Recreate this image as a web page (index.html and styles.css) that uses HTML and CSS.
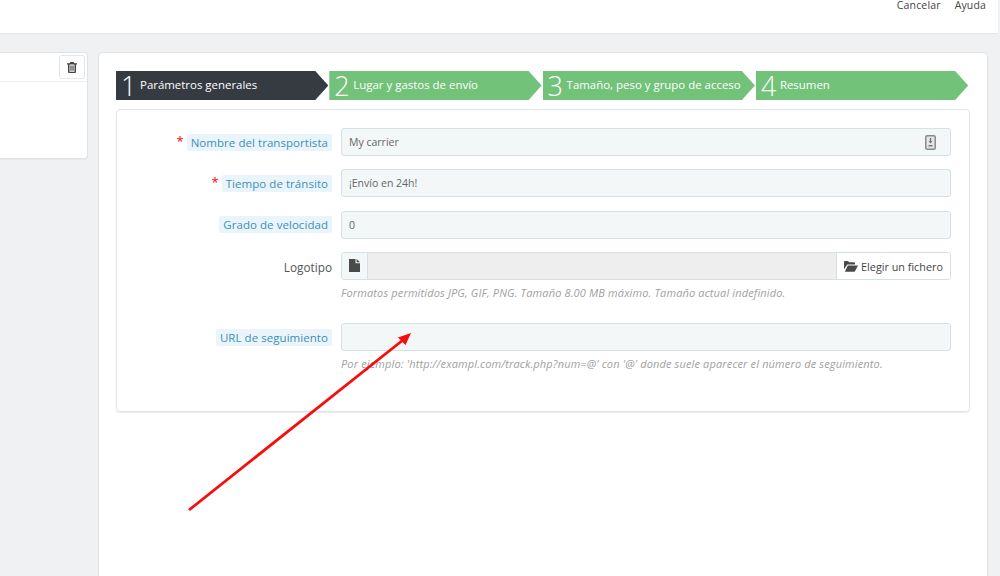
FILE: index.html
```html
<!DOCTYPE html>
<html lang="es">
<head>
<meta charset="utf-8">
<title>Transportista</title>
<link rel="stylesheet" href="styles.css">
</head>
<body>
<header class="topbar">
  <a class="top-link">Cancelar</a>
  <a class="top-link">Ayuda</a>
</header>
<main class="page">
  <aside class="side-panel">
    <div class="side-head">
      <button class="trash-btn" aria-label="Eliminar">
        <svg width="10" height="11" viewBox="0 0 10 11"><path fill="#444" d="M3.3 0h3.4l.6 1.3H10v1.2H9V10a1 1 0 0 1-1 1H2a1 1 0 0 1-1-1V2.500H0V1.300h2.700zM2.500 2.500V9.800h5V2.500zM3.400 3.500h.8v5.300h-.8zM4.600 3.500h.8v5.300h-.8zM5.800 3.500h.8v5.300h-.8z" fill-rule="evenodd"/></svg>
      </button>
    </div>
  </aside>
  <section class="main-panel">
    <ol class="steps">
      <li class="step step-active"><span class="num">1</span><span class="step-label">Parámetros generales</span></li>
      <li class="step"><span class="num">2</span><span class="step-label">Lugar y gastos de envío</span></li>
      <li class="step"><span class="num">3</span><span class="step-label">Tamaño, peso y grupo de acceso</span></li>
      <li class="step"><span class="num">4</span><span class="step-label">Resumen</span></li>
    </ol>
    <form class="form-panel">
      <div class="row">
        <div class="label-col"><span class="req">*</span><span class="tip">Nombre del transportista</span></div>
        <div class="field">
          <span class="value">My carrier</span>
          <svg class="field-icon" width="11" height="15" viewBox="0 0 11 15"><rect x=".75" y=".75" width="9.500" height="13.500" rx="1.500" fill="#e3e5e6" stroke="#8a8a8a" stroke-width="1.500"/><path fill="#777" d="M4.800 3h1.400v4H4.800zM3.500 6h4L5.500 8.500zM3.500 10h4v1.500h-4z"/></svg>
        </div>
      </div>
      <div class="row">
        <div class="label-col"><span class="req">*</span><span class="tip">Tiempo de tránsito</span></div>
        <div class="field"><span class="value">¡Envío en 24h!</span></div>
      </div>
      <div class="row">
        <div class="label-col"><span class="tip">Grado de velocidad</span></div>
        <div class="field"><span class="value">0</span></div>
      </div>
      <div class="row row-file">
        <div class="label-col"><span class="plain">Logotipo</span></div>
        <div class="file-group">
          <span class="file-addon">
            <svg width="11" height="13" viewBox="0 0 11 13"><path fill="#4a4a4a" d="M0 0h6.500v4.200H11V13H0zM7.600 0 11 3.200H7.600z"/></svg>
          </span>
          <span class="file-name"></span>
          <span class="file-btn">
            <svg width="14" height="11" viewBox="0 0 14 11"><path fill="#4a4a4a" d="M0 1a1 1 0 0 1 1-1h3l1 1.300h5a1 1 0 0 1 1 1V3.600H3.300L0 8.200zM3.800 4.600H14l-3 5.600a1 1 0 0 1-.8.500H.8z"/></svg>
            Elegir un fichero
          </span>
        </div>
      </div>
      <p class="help help-file">Formatos permitidos JPG, GIF, PNG. Tamaño 8.00 MB máximo. Tamaño actual indefinido.</p>
      <div class="row row-url">
        <div class="label-col"><span class="tip">URL de seguimiento</span></div>
        <div class="field"></div>
      </div>
      <p class="help">Por ejemplo: 'http://exampl.com/track.php?num=@' con '@' donde suele aparecer el número de seguimiento.</p>
    </form>
  </section>
</main>
<svg class="arrow" width="1000" height="576" viewBox="0 0 1000 576" aria-hidden="true">
  <path d="M189 510 403 340" stroke="#f70d0d" stroke-width="2.800" fill="none"/>
  <path d="M411 333 398 337.500 405.500 345z" fill="#f70d0d"/>
</svg>
</body>
</html>
```
FILE: styles.css
```css
* { box-sizing: border-box; }
html, body { margin: 0; height: 576px; overflow: hidden; }
body {
  position: relative;
  background: #eff1f2;
  font-family: "Open Sans", sans-serif;
  font-size: 11px;
  color: #555;
}
.topbar {
  height: 34px;
  width: 998px;
  background: #fff;
  border-bottom: 1px solid #e4e6e8;
  display: flex;
  justify-content: flex-end;
  gap: 14px;
  padding-right: 12px;
  font-size: 10.500px;
  line-height: 10px;
  letter-spacing: .15px;
  color: #444;
}
.top-link { display: block; }
.page {
  display: flex;
  align-items: flex-start;
  padding-top: 18px;
  gap: 10px;
}
.side-panel {
  width: 88px;
  height: 107px;
  background: #fff;
  border: 1px solid #dfe3e6;
  border-left: 0;
  border-radius: 0 4px 4px 0;
  box-shadow: 0 1px 1px #e4e6e8;
}
.side-head {
  height: 29px;
  border-bottom: 1px solid #eef0f1;
  display: flex;
  justify-content: flex-end;
  padding: 2px 2px 0 0;
}
.trash-btn {
  width: 26px;
  height: 24px;
  padding: 0;
  background: #fff;
  border: 1px solid #e3e6e8;
  border-radius: 3px;
  display: flex;
  align-items: center;
  justify-content: center;
}
.main-panel {
  width: 890px;
  height: 540px;
  background: #fff;
  border: 1px solid #dfe3e6;
  border-radius: 4px;
  padding: 18px 17px 0;
}
.steps {
  list-style: none;
  margin: 0 0 9px;
  padding: 0;
  height: 29px;
  display: flex;
  gap: 1px;
  width: 854px;
}
.step {
  flex: 0 0 212.300px;
  height: 29px;
  display: flex;
  align-items: center;
  padding-left: 5px;
  background: #72c279;
  color: #fff;
  clip-path: polygon(0 0, calc(100% - 13px) 0, 100% 50%, calc(100% - 13px) 100%, 0 100%);
}
.step-active { background: #363a41; }
.num {
  font-size: 27px;
  font-weight: 300;
  line-height: 29px;
  width: 19px;
}
.step-label {
  font-size: 11.450px;
  white-space: nowrap;
  margin-bottom: 2px;
}
.form-panel {
  width: 854px;
  height: 303px;
  border: 1px solid #e1e5e8;
  border-radius: 4px;
  box-shadow: 0 1px 1px #e8eaec;
  padding: 18px 18px 0 0;
}
.row {
  display: flex;
  align-items: center;
  height: 28px;
  margin-bottom: 13.330px;
}
.label-col {
  flex: 0 0 215px;
  display: flex;
  justify-content: flex-end;
  align-items: center;
  margin-right: 9px;
  font-size: 11.500px;
}
.req {
  color: #f00;
  font-size: 13px;
  line-height: 13px;
  margin-right: 3px;
  align-self: flex-start;
  padding-top: 1px;
}
.tip {
  background: #e9f5fb;
  color: #3f8fb5;
  border-radius: 2px;
  padding: 0 4px;
  line-height: 17px;
  letter-spacing: .05px;
}
.plain { color: #555; font-size: 11.800px; margin-top: 3px; }
.field {
  flex: 1;
  height: 28px;
  background: #f3f7f8;
  border: 1px solid #d5e0e5;
  border-radius: 3px;
  padding: 0 7px;
  display: flex;
  align-items: center;
  justify-content: space-between;
  font-size: 10.500px;
  color: #666;
}
.field-icon { margin-right: 7px; }
.file-group {
  flex: 1;
  height: 28px;
  display: flex;
  border: 1px solid #d5e0e5;
  border-radius: 3px;
  overflow: hidden;
}
.file-addon {
  width: 26px;
  background: #f3f7f8;
  border-right: 1px solid #d5e0e5;
  display: flex;
  align-items: center;
  justify-content: center;
}
.file-name { flex: 1; background: #eeeeee; }
.file-btn {
  width: 114px;
  background: #fff;
  border-left: 1px solid #d5e0e5;
  display: flex;
  align-items: center;
  justify-content: center;
  gap: 3px;
  padding-top: 1px;
  font-size: 10.800px;
  color: #444;
}
.row-file { margin-bottom: 0; }
.help {
  margin: 0 0 0 224px;
  font-size: 11px;
  font-style: italic;
  line-height: 13px;
  letter-spacing: .14px;
  color: #a0a0a0;
  white-space: nowrap;
}
.help-file { margin-top: 6px; margin-bottom: 24px; }
.row-url { margin-bottom: 6px; }
.row-url .tip { margin-top: 1px; }
.arrow { position: absolute; left: 0; top: 0; pointer-events: none; }
```
